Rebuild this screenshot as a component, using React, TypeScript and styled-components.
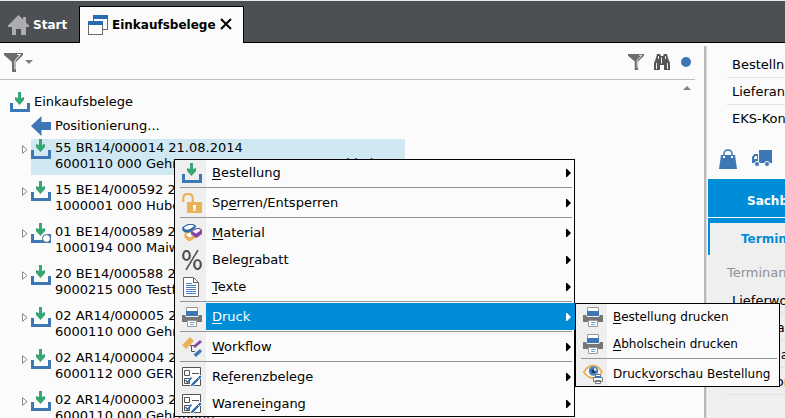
import React from "react";
import styled, { createGlobalStyle, css } from "styled-components";

const blue = "#008dd8";
const iconBlue = "#3d78b5";
const green = "#38a575";
const amber = "#e9b158";
const grey = "#6d6d6d";

const GlobalStyle = createGlobalStyle`
  * { box-sizing: border-box; }
  html, body { margin: 0; background: #fbfbfb; }
  body, button {
    font-family: "DejaVu Sans", Verdana, sans-serif;
    font-size: 13px;
    line-height: 16px;
    color: #000;
  }
  button { margin: 0; padding: 0; border: 0; background: none; text-align: left; white-space: nowrap; }
  ul { list-style: none; margin: 0; padding: 0; }
  svg { display: block; flex: none; }
`;

const Window = styled.div`
  position: relative;
  display: flex;
  flex-direction: column;
  height: 100vh;
  overflow: hidden;
  border-top: 1px solid #e6eae8;
`;

const TabBar = styled.header`
  display: flex;
  flex: none;
  align-items: flex-end;
  height: 42px;
  background: #4c4f53;
  box-shadow: inset 0 -1px #000;
`;

const Tab = styled.button<{ $active?: boolean }>`
  display: flex;
  align-items: center;
  gap: 4px;
  height: 37px;
  padding-left: 8px;
  font-size: 12px;
  font-weight: bold;
  color: #fff;
  ${(p) =>
    p.$active &&
    css`
      color: #000;
      background: #fbfbfb;
      border: 1px solid #000;
      border-bottom: 0;
    `}
`;

const TabGroup = styled.div<{ $width: number }>`
  display: flex;
  width: ${(p) => p.$width}px;
  position: relative;
  & > ${Tab} { flex: 1; }
`;

const CloseButton = styled.button`
  position: absolute;
  right: 12px;
  top: 12px;
`;

const Body = styled.div`
  display: flex;
  flex: 1;
  min-height: 0;
`;

const TreePane = styled.main`
  flex: 1;
  min-width: 0;
  padding-right: 9px;
`;

const Toolbar = styled.div`
  display: flex;
  align-items: center;
  gap: 10px;
  height: 37px;
  padding: 2px 3px 0 4px;
  border-bottom: 1px solid #c0c0c0;
`;

const ToolButton = styled.button<{ $push?: boolean }>`
  display: flex;
  align-items: center;
  gap: 2px;
  ${(p) => p.$push && "margin-right: auto;"}
`;

const TreeArea = styled.div`
  display: flex;
  justify-content: space-between;
`;

const Tree = styled.ul`
  padding-top: 10px;
  white-space: nowrap;
`;

const TreeLine = styled.li<{ $indent: number }>`
  display: flex;
  align-items: center;
  gap: 4px;
  height: 24px;
  padding-left: ${(p) => p.$indent}px;
`;

const DocItem = styled.li`
  display: flex;
  align-items: flex-start;
  gap: 3px;
  height: 42px;
  padding: 1px 0 0 22px;
`;

const Expander = styled.button`
  padding-top: 6px;
`;

const DocBody = styled.div<{ $selected?: boolean }>`
  display: flex;
  gap: 4px;
  width: 374px;
  height: 36px;
  overflow: hidden;
  background: ${(p) => (p.$selected ? "#d0e8f2" : "transparent")};
`;

const DocText = styled.div`
  padding-top: 1px;
  white-space: pre-line;
  line-height: 16px;
`;

const ScrollUp = styled.button`
  align-self: flex-start;
  padding: 6px 4px 0 0;
`;

const Splitter = styled.div`
  flex: none;
  width: 3px;
  margin: 3px 1px 0 0;
  background: #b9b9b9;
  border-right: 1px solid #d8d8d8;
`;

const Details = styled.aside`
  flex: none;
  width: 77px;
  overflow: hidden;
  white-space: nowrap;
  display: flex;
  flex-direction: column;
`;

const FieldList = styled.ul<{ $top: number }>`
  padding: ${(p) => p.$top}px 0 0 19px;
`;

const Field = styled.li`
  height: 27px;
  padding: 6px 0 0 5px;
  border-bottom: 1px solid #e2e2e2;
  &:last-child { border-color: transparent; }
`;

const IconRow = styled.div`
  display: flex;
  gap: 14px;
  padding: 17px 0 10px 11px;
`;

const SectionTab = styled.button`
  flex: none;
  height: 39px;
  padding: 6px 0 0 39px;
  font-size: 12px;
  font-weight: bold;
  color: #fff;
  background: ${blue};
  border-bottom: 1px solid #fff;
`;

const SectionPage = styled.section`
  flex: 1;
  border-top: 5px solid ${blue};
  background: #efefef;
`;

const SubTab = styled.button`
  display: block;
  width: 100%;
  height: 32px;
  padding-left: 31px;
  font-size: 12px;
  font-weight: bold;
  color: ${blue};
  border-left: 2px solid ${blue};
`;

const GroupTitle = styled.div`
  padding: 10px 0 0 19px;
  color: #8d9195;
`;

const menuBox = css`
  position: absolute;
  background: linear-gradient(to right, #efefef 32px, #fbfbfb 32px);
  outline: 1px solid #000;
  outline-offset: -1px;
`;

const Menu = styled.ul`
  ${menuBox}
  left: 174px;
  top: 158px;
  width: 401px;
`;

const MenuButton = styled.button<{ $active?: boolean }>`
  display: flex;
  align-items: center;
  gap: 10px;
  width: 100%;
  height: 27px;
  padding: 0 4px 0 8px;
  color: ${(p) => (p.$active ? "#fff" : "#000")};
  background: ${(p) => (p.$active ? `linear-gradient(to right, transparent 32px, ${blue} 32px)` : "none")};
  & u { text-underline-offset: 2px; }
`;

const SubMenu = styled.ul`
  ${menuBox}
  left: 100%;
  top: 0;
  width: 205px;
  & ${MenuButton} { font-size: 12px; }
`;

const MenuEntry = styled.li`
  position: relative;
`;

const MenuLabel = styled.span`
  flex: 1;
`;

const Separator = styled.li`
  height: 1px;
  margin: 1px 3px 1px 6px;
  background: #8f979a;
`;

const InboxIcon = ({ ring }: { ring?: boolean }) => (
  <svg width="20" height="20" viewBox="0 0 20 20">
    <path d="M0 11h3v6h14v-6h3v9H0z" fill={iconBlue} />
    <path d="M8 0h3v6l3-1v3l-4.500 5L5 8V5l3 1z" fill={green} />
    {ring && <circle cx="15.500" cy="15.500" r="4" fill="#fff" stroke="#3a5f86" />}
  </svg>
);

const HomeIcon = () => (
  <svg width="21" height="20" viewBox="0 0 21 20">
    <path d="M10.500 0L15 4.500V2h3v5.500l3 3V12h-3v8h-5v-6H8v6H4v-8H0v-1.500z" fill="#adadad" />
  </svg>
);

const WindowsIcon = () => (
  <svg width="20" height="20" viewBox="0 0 20 20" shapeRendering="crispEdges">
    <path d="M5.500 3v3M19.500 3v11.500H15" fill="none" stroke="#6a6a6a" />
    <path d="M5 0h15v4H5z" fill="#2a6cb0" />
    <path d="M.5 6.500h14v13H.5z" fill="#fff" stroke="#6a6a6a" />
    <path d="M0 6h15v4H0z" fill="#2a6cb0" />
  </svg>
);

const CloseIcon = () => (
  <svg width="12" height="12" viewBox="0 0 12 12">
    <path d="M1 1l10 10M11 1L1 11" stroke="#000" strokeWidth="2" />
  </svg>
);

const FunnelIcon = ({ size }: { size: number }) => (
  <svg width={size} height={size} viewBox="0 0 19 19">
    <path d="M0 0h19v2l-7 7v10H8V9L0 2z" fill={grey} />
    <path d="M13 1.500h3.500l-5.500 6v9" fill="none" stroke="#fff" />
  </svg>
);

const CaretIcon = ({ up }: { up?: boolean }) => (
  <svg width="8" height="4" viewBox="0 0 8 4">
    <path d={up ? "M0 4l4-4 4 4z" : "M0 0h8L4 4z"} fill="#808080" />
  </svg>
);

const BinocularsIcon = () => (
  <svg width="16" height="16" viewBox="0 0 16 16">
    <path d="M3 0h3l1 2h2l1-2h3l1 4 2 5v7h-6v-5H6v5H0V9l2-5z" fill="#555" />
    <path d="M4.500 2v3M11.500 2v3M7.500 3.500v6M2.500 9v6M13.500 9v6" stroke="#e8e8e8" />
  </svg>
);

const ExpandIcon = () => (
  <svg width="6" height="9" viewBox="0 0 6 9">
    <path d="M.5.7v7.600l4.600-3.800z" fill="#fff" stroke="#888" />
  </svg>
);

const BackIcon = () => (
  <svg width="20" height="20" viewBox="0 0 20 20">
    <path d="M0 10L10.500 0v6H20v8h-9.500v6z" fill={iconBlue} />
  </svg>
);

const BagIcon = () => (
  <svg width="19" height="20" viewBox="0 0 19 20">
    <path d="M2 6h14l2 14H0z" fill={iconBlue} />
    <path d="M5 7.500V5q0-4 4-4t4 4v2.500" fill="none" stroke={iconBlue} strokeWidth="1.500" />
    <path d="M4 7h2v2H4zM12 7h2v2h-2z" fill="#fff" />
  </svg>
);

const TruckIcon = () => (
  <svg width="20" height="20" viewBox="0 0 20 20">
    <path d="M7 1h13v13H7zM0 14V8l2.500-3H6v9z" fill={iconBlue} />
    <path d="M2 8.500L3.500 7H5v3H2z" fill="#fff" />
    <circle cx="5" cy="15" r="2.500" fill={iconBlue} stroke="#fbfbfb" />
    <circle cx="15" cy="15" r="2.500" fill={iconBlue} stroke="#fbfbfb" />
  </svg>
);

const LockIcon = () => (
  <svg width="20" height="20" viewBox="0 0 20 20">
    <path d="M1.200 9V5.500Q1.200 1 6 1t4.800 4.500V10" fill="none" stroke={amber} strokeWidth="2.200" />
    <path d="M5 9h15v11H5z" fill={amber} />
    <path d="M11 12h3v2.500l-.5.500v3h-2v-3l-.5-.5z" fill="#fff" />
  </svg>
);

const MaterialIcon = () => (
  <svg width="20" height="20" viewBox="0 0 20 20" strokeLinejoin="round">
    <path d="M2.500 10.500L7 8l6.500 4v3L7 18.500l-4.500-4z" fill={amber} />
    <path d="M4 11.500l4-2 4 2.500-4.500 2.500z" fill="#fff" />
    <path d="M.7 4.500L6 1.500h5l2.500 1.500L7.500 7H3z" fill="#fff" stroke="#2d6cab" strokeWidth="1.200" />
    <path d="M.3 5L3 7h4.500l6-4v2l-6 4.500H3L.3 7.500z" fill="#2d6cab" />
    <path d="M9 8.500L14 5h3.500l2.500 2v4l-5.500 4L9 11.500z" fill="#8549a5" />
    <path d="M10.500 8.500L14.500 6H17l1.500 1.500-4.500 3z" fill="#fff" />
  </svg>
);

const PercentIcon = () => (
  <svg width="20" height="20" viewBox="0 0 20 20" fill="none" stroke="#505050">
    <path d="M16 0L4 20" strokeWidth="1.600" />
    <ellipse cx="4.500" cy="5.500" rx="3.300" ry="4.500" strokeWidth="2.200" />
    <ellipse cx="15.500" cy="14.500" rx="3.300" ry="4.500" strokeWidth="2.200" />
  </svg>
);

const TextIcon = () => (
  <svg width="20" height="20" viewBox="0 0 20 20">
    <path d="M1.500.500h10l5 5v14h-15z" fill="#fff" stroke="#666" />
    <path d="M11.500.5v5h5" fill="none" stroke="#666" />
    <path d="M4 6.500h6M4 8.500h10M4 10.500h10M4 12.500h10M4 14.500h10M4 16.500h10" stroke="#4a83bd" />
  </svg>
);

const PrinterIcon = () => (
  <svg width="20" height="20" viewBox="0 0 20 20">
    <path d="M0 8h3l1 2h12l1-2h3v7H0z" fill="#767676" />
    <path d="M4.500 8V.5h11V8" fill="#fff" stroke="#999" />
    <path d="M4 4h12v5H4z" fill={iconBlue} />
    <path d="M5.500 13.500h9v6h-9z" fill="#fff" stroke="#999" />
    <path d="M8 15.500h5M8 17.500h4" stroke="#75a5d3" />
  </svg>
);

const WorkflowIcon = () => (
  <svg width="20" height="20" viewBox="0 0 20 20">
    <path d="M8 8.500h4M9.500 8.500v6H13" fill="none" stroke="#555" />
    <path d="M8 0l4 4-8 8-4-4z" fill={amber} />
    <path d="M18 3l2 2-7 6-2-2z" fill="#8549a5" />
    <path d="M18 12l2 2.500-6 5.500-2.500-2.500z" fill={iconBlue} />
  </svg>
);

const ChecklistIcon = () => (
  <svg width="20" height="20" viewBox="0 0 20 20">
    <path d="M.5.500h18v18H.5z" fill="#fff" stroke="#555" />
    <path d="M2.500 3.500h5v5h-5zM2.500 11.500h5v5h-5zM10 6.500h7" fill="none" stroke="#555" />
    <path d="M3.500 13l2 2.500 4-5" fill="none" stroke="#2a6cb0" strokeWidth="1.500" />
    <path d="M18 8l2 2-9 9-3 1 1-3z" fill="#2a6cb0" stroke="#fff" strokeWidth=".8" />
    <path d="M15.500 10.500l2 2" stroke="#fff" />
  </svg>
);

const PreviewIcon = () => (
  <svg width="20" height="20" viewBox="0 0 20 20">
    <path d="M.8 8Q5 1.500 10 1.500T19 8q-4 6-9 6T.8 8z" fill="#fff" stroke={amber} strokeWidth="2" />
    <circle cx="10.500" cy="7" r="4.800" fill="#4a83bd" />
    <circle cx="10.500" cy="7" r="2.200" fill="#183e68" />
    <circle cx="12" cy="5.500" r="1.200" fill="#fff" />
    <path d="M10.500 13.500h9v4h-9zM12.500 10.500h5v3h-5zM12.500 16.500h5v3h-5z" fill="#fff" stroke="#777" />
    <path d="M12 12h6v2h-6z" fill={iconBlue} />
  </svg>
);

const ArrowIcon = () => (
  <svg width="5" height="8" viewBox="0 0 5 8">
    <path d="M0 0h1l4 4-4 4H0z" fill="currentColor" />
  </svg>
);

type Entry = { pre?: string; key: string; post: string; icon: React.ReactNode; open?: boolean } | null;

const printEntries: Entry[] = [
  { key: "B", post: "estellung drucken", icon: <PrinterIcon /> },
  { key: "A", post: "bholschein drucken", icon: <PrinterIcon /> },
  null,
  { pre: "Druck", key: "v", post: "orschau Bestellung", icon: <PreviewIcon /> },
];

const entries: Entry[] = [
  { key: "B", post: "estellung", icon: <InboxIcon /> },
  null,
  { pre: "Sp", key: "e", post: "rren/Entsperren", icon: <LockIcon /> },
  null,
  { key: "M", post: "aterial", icon: <MaterialIcon /> },
  { pre: "Beleg", key: "r", post: "abatt", icon: <PercentIcon /> },
  { key: "T", post: "exte", icon: <TextIcon /> },
  null,
  { key: "D", post: "ruck", icon: <PrinterIcon />, open: true },
  null,
  { key: "W", post: "orkflow", icon: <WorkflowIcon /> },
  null,
  { pre: "Re", key: "f", post: "erenzbelege", icon: <ChecklistIcon /> },
  { pre: "Warene", key: "i", post: "ngang", icon: <ChecklistIcon /> },
];

const documents = [
  { text: "55 BR14/000014 21.08.2014\n6000110 000 Gehrmann & Co. aus Neuenwald ob", selected: true },
  { text: "15 BE14/000592 21.08.2014\n1000001 000 Huber" },
  { text: "01 BE14/000589 21.08.2014\n1000194 000 Maiwald", ring: true },
  { text: "20 BE14/000588 21.08.2014\n9000215 000 Testfirma" },
  { text: "02 AR14/000005 21.08.2014\n6000110 000 Gehrmann" },
  { text: "02 AR14/000004 21.08.2014\n6000112 000 GERRY" },
  { text: "02 AR14/000003 21.08.2014\n6000110 000 Gehrmann" },
];

const Entries = ({ items, nested }: { items: Entry[]; nested?: boolean }) => (
  <>
    {items.map((item, i) =>
      item ? (
        <MenuEntry key={i} role="none">
          <MenuButton role="menuitem" $active={item.open}>
            {item.icon}
            <MenuLabel>
              {item.pre}
              <u>{item.key}</u>
              {item.post}
            </MenuLabel>
            {!nested && <ArrowIcon />}
          </MenuButton>
          {item.open && (
            <SubMenu role="menu" aria-label="Druck">
              <Entries items={printEntries} nested />
            </SubMenu>
          )}
        </MenuEntry>
      ) : (
        <Separator key={i} role="separator" />
      ),
    )}
  </>
);

export default function App() {
  return (
    <>
      <GlobalStyle />
      <Window>
        <TabBar>
          <TabGroup $width={79}>
            <Tab>
              <HomeIcon />
              Start
            </Tab>
          </TabGroup>
          <TabGroup $width={165}>
            <Tab $active>
              <WindowsIcon />
              Einkaufsbelege
            </Tab>
            <CloseButton aria-label="Schließen">
              <CloseIcon />
            </CloseButton>
          </TabGroup>
        </TabBar>
        <Body>
          <TreePane>
            <Toolbar>
              <ToolButton $push aria-label="Filter wählen">
                <FunnelIcon size={19} />
                <CaretIcon />
              </ToolButton>
              <ToolButton aria-label="Filter">
                <FunnelIcon size={16} />
              </ToolButton>
              <ToolButton aria-label="Suchen">
                <BinocularsIcon />
              </ToolButton>
              <ToolButton aria-label="Status">
                <svg width="12" height="12" viewBox="0 0 12 12">
                  <circle cx="6" cy="6" r="5" fill={iconBlue} />
                </svg>
              </ToolButton>
            </Toolbar>
            <TreeArea>
              <Tree>
                <TreeLine $indent={10}>
                  <InboxIcon />
                  Einkaufsbelege
                </TreeLine>
                <TreeLine $indent={31}>
                  <BackIcon />
                  Positionierung...
                </TreeLine>
                {documents.map((doc, i) => (
                  <DocItem key={i}>
                    <Expander aria-label="Aufklappen">
                      <ExpandIcon />
                    </Expander>
                    <DocBody $selected={doc.selected}>
                      <InboxIcon ring={doc.ring} />
                      <DocText>{doc.text}</DocText>
                    </DocBody>
                  </DocItem>
                ))}
              </Tree>
              <ScrollUp aria-label="Nach oben">
                <CaretIcon up />
              </ScrollUp>
            </TreeArea>
          </TreePane>
          <Splitter />
          <Details>
            <FieldList $top={8}>
              <Field>Bestellnummer</Field>
              <Field>Lieferant</Field>
              <Field>EKS-Kontrakt</Field>
            </FieldList>
            <IconRow>
              <BagIcon />
              <TruckIcon />
            </IconRow>
            <SectionTab>Sachbearbeiter</SectionTab>
            <SectionPage>
              <SubTab>Termine</SubTab>
              <GroupTitle>Terminangaben</GroupTitle>
              <FieldList $top={6}>
                <Field>Lieferwoche</Field>
                <Field>Lieferdatum</Field>
                <Field>Lieferplan</Field>
                <Field>Lieferkonto</Field>
                <Field />
              </FieldList>
            </SectionPage>
          </Details>
        </Body>
        <Menu role="menu" aria-label="Beleg">
          <Entries items={entries} />
        </Menu>
      </Window>
    </>
  );
}
